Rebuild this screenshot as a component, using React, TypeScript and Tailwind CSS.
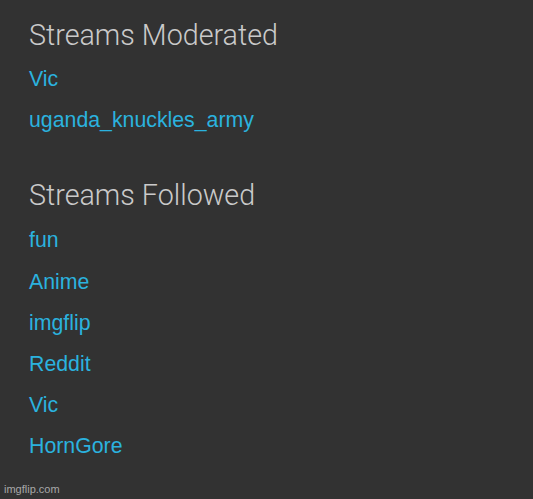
import React from "react";

const moderated = ["Vic", "uganda_knuckles_army"];
const followed = ["fun", "Anime", "imgflip", "Reddit", "Vic", "HornGore"];

const StreamList = ({ items }: { items: string[] }) => (
  <ul className="flex flex-col">
    {items.map((name, i) => (
      <li key={i} className="text-[21.3px] leading-[41.2px] text-[#2bb2df]">
        {name}
      </li>
    ))}
  </ul>
);

const App = () => {
  return (
    <div
      className="relative h-[499px] w-full overflow-hidden bg-[#323232] px-[29px] pt-[15px]"
      style={{ fontFamily: "'Liberation Sans', Arial, sans-serif" }}
    >
      <h2 className="text-[28.7px] font-light leading-[40px] text-[#cacaca] [font-family:Roboto,'Liberation_Sans',sans-serif]">
        Streams Moderated
      </h2>
      <div className="mt-[4px]">
        <StreamList items={moderated} />
      </div>

      <h2 className="mt-[34px] text-[28.7px] font-light leading-[40px] text-[#cacaca] [font-family:Roboto,'Liberation_Sans',sans-serif]">
        Streams Followed
      </h2>
      <div className="mt-[5px]">
        <StreamList items={followed} />
      </div>

      {/* watermark */}
      <span className="absolute bottom-[2px] left-[4px] text-[11px] text-[#a8a8a8]">
        imgflip.com
      </span>
    </div>
  );
};

export default App;
